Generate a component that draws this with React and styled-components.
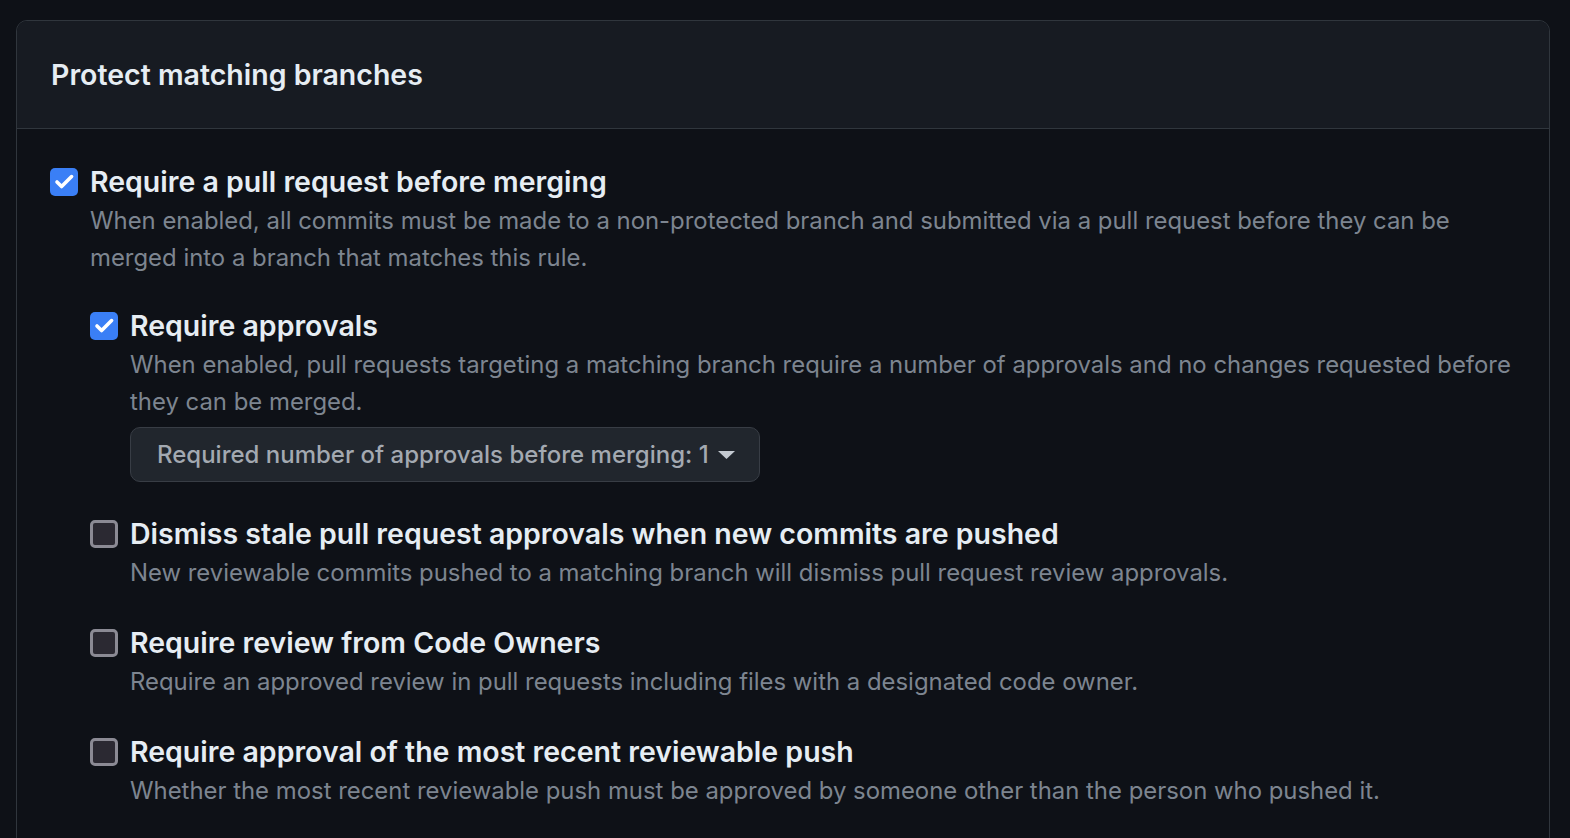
import React from 'react';
import styled, { createGlobalStyle } from 'styled-components';

const GlobalStyle = createGlobalStyle`
  html, body {
    margin: 0;
    padding: 0;
    background-color: #0e1117;
  }
  body {
    font-family: Inter, "Noto Sans", "Liberation Sans", sans-serif;
    -webkit-font-smoothing: antialiased;
  }
`;

const Page = styled.div`
  padding: 20px 20px 0 16px;
`;

const Box = styled.section`
  border: 1.5px solid #30363d;
  border-radius: 11px 11px 0 0;
  overflow: hidden;
`;

const Header = styled.header`
  height: 107px;
  display: flex;
  align-items: center;
  padding: 0 34px;
  background-color: #171b22;
  border-bottom: 1.5px solid #30363d;
`;

const Heading = styled.h2`
  margin: 0;
  font-size: 28.5px;
  font-weight: 600;
  color: #e6edf3;
`;

const Body = styled.div`
  padding: 35px 34px 30px 33px;
  background-color: #0e1117;
`;

const Item = styled.div`
  display: flex;
  gap: 12px;
  & + & {
    margin-top: ${(p) => p.$gap || 31}px;
  }
`;

const Check = styled.span`
  flex: none;
  width: 28px;
  height: 28px;
  margin-top: 4px;
  box-sizing: border-box;
  border-radius: 5px;
  display: flex;
  align-items: center;
  justify-content: center;
  background-color: ${(p) => (p.$on ? '#3a7ff6' : '#2b2932')};
  border: ${(p) => (p.$on ? 'none' : '3px solid #8b8a94')};
`;

const Content = styled.div`
  flex: 1;
  min-width: 0;
`;

const Title = styled.div`
  font-size: 28.5px;
  line-height: 36px;
  font-weight: 600;
  color: #e6edf3;
`;

const Desc = styled.p`
  margin: 2px 0 0;
  font-size: 23.9px;
  line-height: 37px;
  color: #7d8590;
`;

const Nested = styled.div`
  margin-top: 32px;
`;

const Select = styled.button`
  margin-top: 7px;
  height: 55px;
  display: inline-flex;
  align-items: center;
  gap: 9px;
  padding: 0 24px 0 26px;
  border: 1.5px solid #383d45;
  border-radius: 10px;
  background-color: #21262d;
  color: #a3a9b1;
  font-family: inherit;
  font-size: 24px;
  font-weight: 500;
`;

const CheckIcon = () => (
  <svg width="28" height="28" viewBox="0 0 28 28" fill="none">
    <path d="M7 14 L11.6 18.6 L21.6 8.6" stroke="#fff" strokeWidth="3.6" strokeLinecap="round" strokeLinejoin="round" />
  </svg>
);

const Caret = () => (
  <svg width="17" height="8" viewBox="0 0 17 8">
    <path d="M0 0 H17 L8.5 8 Z" fill="#c4cad1" />
  </svg>
);

const Rule = ({ on, title, desc, gap, children }) => (
  <Item $gap={gap}>
    <Check $on={on}>{on && <CheckIcon />}</Check>
    <Content>
      <Title>{title}</Title>
      <Desc>{desc}</Desc>
      {children}
    </Content>
  </Item>
);

export default function App() {
  return (
    <>
      <GlobalStyle />
      <Page>
        <Box>
          <Header>
            <Heading>Protect matching branches</Heading>
          </Header>
          <Body>
            <Rule
              on
              title="Require a pull request before merging"
              desc="When enabled, all commits must be made to a non-protected branch and submitted via a pull request before they can be merged into a branch that matches this rule."
            >
              <Nested>
                <Rule
                  on
                  title="Require approvals"
                  desc="When enabled, pull requests targeting a matching branch require a number of approvals and no changes requested before they can be merged."
                >
                  <Select>
                    Required number of approvals before merging: 1
                    <Caret />
                  </Select>
                </Rule>
                <Rule
                  gap={34}
                  title="Dismiss stale pull request approvals when new commits are pushed"
                  desc="New reviewable commits pushed to a matching branch will dismiss pull request review approvals."
                />
                <Rule
                  title="Require review from Code Owners"
                  desc="Require an approved review in pull requests including files with a designated code owner."
                />
                <Rule
                  title="Require approval of the most recent reviewable push"
                  desc="Whether the most recent reviewable push must be approved by someone other than the person who pushed it."
                />
              </Nested>
            </Rule>
          </Body>
        </Box>
      </Page>
    </>
  );
}
